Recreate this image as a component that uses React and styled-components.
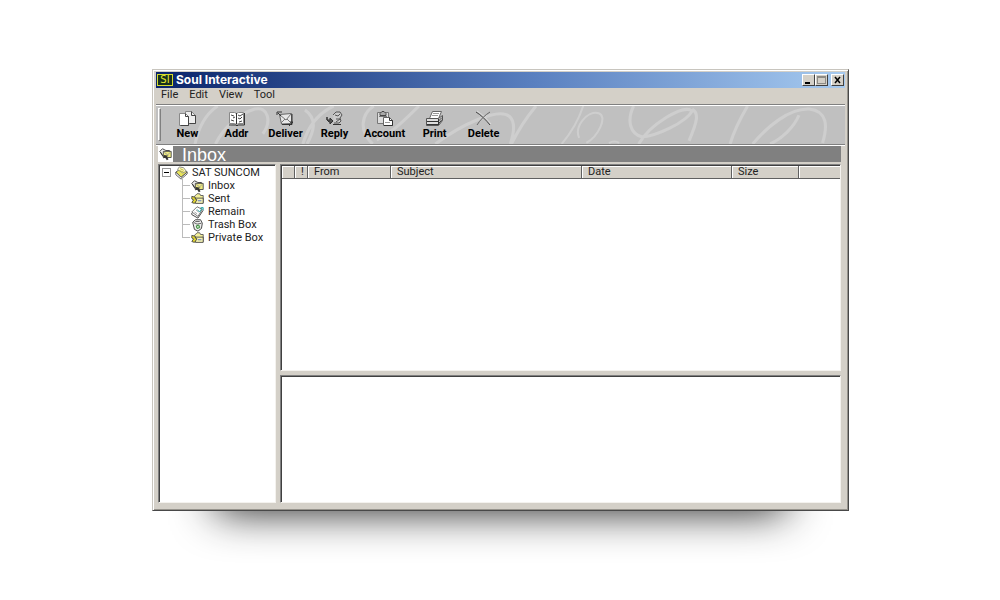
import React, { useState } from "react";
import styled, { createGlobalStyle } from "styled-components";

const tools = ["New", "Addr", "Deliver", "Reply", "Account", "Print", "Delete"];
const menus = ["File", "Edit", "View", "Tool"];
const folders = ["Inbox", "Sent", "Remain", "Trash Box", "Private Box"];
const columns = [
    { name: "", width: 13 },
    { name: "!", width: 13 },
    { name: "From", width: 83 },
    { name: "Subject", width: 191 },
    { name: "Date", width: 150 },
    { name: "Size", width: 67 },
    { name: "" },
];

const toolIcons = {
    New: (
        <g>
            <path d="M7.5 1.5h6l4 4v8h-10z" fill="#eee" stroke="#888" />
            <path d="M13.500 1.500v4h4v8h-6" fill="none" stroke="#444" />
            <path d="M1.500 3.500h6l3 3v9h-9z" fill="#fff" stroke="#888" />
            <path d="M7.500 3.500v3h3v9h-8" fill="none" stroke="#444" />
        </g>
    ),
    Addr: (
        <g>
            <path d="M2.5 2.5h5l2 1 2-1h5v11h-5l-2 1-2-1h-5z" fill="#fff" stroke="#888" />
            <path d="M9.5 3v11M17.5 3v12H11l-1 1-1-1H2" fill="none" stroke="#333" />
            <path d="M4 5l3 1M6 8l2-1M4 10l3 1M11 5l2 1 3-2M11 8l2 1 2-2M12 12l3-1" fill="none" stroke="#444" />
        </g>
    ),
    Deliver: (
        <g>
            <path d="M3.5 4.5l12-1v10l-10 .5z" fill="#e8e8e8" stroke="#666" />
            <path d="M4 5l6 5 5-6M5 13l4-4M15 13l-4-4" fill="none" stroke="#777" />
            <path d="M1 2h5M1 2v3M2 3l3 3M14 12h3M17 12l-4 4" fill="none" stroke="#333" />
            <path d="M6 14.500h10V4" fill="none" stroke="#333" />
        </g>
    ),
    Reply: (
        <g>
            <path d="M8 5l3-3h4l2 3-2 3 1 3-2 2H9" fill="#ccc" stroke="#555" />
            <path d="M10 5l3 1 2-2M11 9h4l-4 3" fill="none" stroke="#555" />
            <path d="M2 7v3h3V8l3 3-3 3v-2H4L2 10z" fill="#555" stroke="#333" />
            <path d="M8 14.500h8" stroke="#333" />
        </g>
    ),
    Account: (
        <g>
            <path d="M2.5 2.5h11v11h-11z" fill="#ddd" stroke="#777" />
            <path d="M5 3.5l2-2h2l2 2v2H5z" fill="#aaa" stroke="#444" />
            <path d="M4 6.5h8M3 13.5h5" stroke="#777" />
            <path d="M8.5 7.5h6l3 3v5h-9z" fill="#fff" stroke="#666" />
            <path d="M14.5 7.5v3h3v5H9" fill="none" stroke="#333" />
            <path d="M10 12.5h5" stroke="#999" />
        </g>
    ),
    Print: (
        <g>
            <path d="M7.5 1.5h9l-3 7h-9z" fill="#fff" stroke="#666" />
            <path d="M8 3.5h6M7 5.5h6" stroke="#999" />
            <path d="M1.5 8.5h12l4-3v5l-4 5h-12z" fill="#ddd" stroke="#555" />
            <path d="M2 11.5h11l4-4M2 14.500h11l4-5M13.5 9v6" fill="none" stroke="#333" />
        </g>
    ),
    Delete: (
        <g fill="none">
            <path d="M3 1c5 3 10 8 14 13" stroke="#ddd" />
            <path d="M2 2c5 3 10 8 14 13" stroke="#444" />
            <path d="M16 2C11 5 6 10 3 15" stroke="#666" />
        </g>
    ),
};

const folderIcons = {
    Root: (
        <g>
            <path d="M1 7l7-5 6 5-7 6z" fill="#e8e45c" stroke="#444" />
            <path d="M1 7v3l6 5 7-6V7l-7 6z" fill="#fff" stroke="#555" />
            <path d="M3 4l2-3 5 1 3 4-4 2z" fill="#fffcc0" stroke="#888" />
            <path d="M5 5l5 2M6 3l4 2" stroke="#b9b22d" />
        </g>
    ),
    Inbox: (
        <g>
            <path d="M1 5l3-3 4 2h4v6H4z" fill="#eee" stroke="#333" />
            <path d="M5 5h9v7H5z" fill="#efeb80" stroke="#444" />
            <path d="M6 6l4 3 3-3" fill="none" stroke="#999" />
            <path d="M6 9l5 1-2 1 2 3-2 1-2-3-2 1z" fill="#333" />
            <path d="M2 6l3 5" stroke="#333" />
        </g>
    ),
    Sent: (
        <g>
            <path d="M4 5l3-3h3l1 2h3v8H4z" fill="#f4f09a" stroke="#555" />
            <path d="M5 7h9v6H5z" fill="#f8f4b0" stroke="#444" />
            <path d="M1 5l4 1v2l2 1-3 4-3-1 2-3-2-1z" fill="#e2d72f" stroke="#444" />
            <path d="M8 10h4" stroke="#46c" />
        </g>
    ),
    Remain: (
        <g>
            <path d="M1 8l6-6 6 3-5 8z" fill="#fff" stroke="#666" />
            <path d="M1 9v2l7 4 6-9" fill="none" stroke="#333" />
            <path d="M4 8l3 2M6 6l3 2" stroke="#999" />
            <path d="M7 5l3 3 3-5M11 3h3v3" fill="none" stroke="#18a0a0" />
        </g>
    ),
    "Trash Box": (
        <g>
            <path d="M2 5l3-3h6l2 4-1 6-4 3-4-2z" fill="#eee" stroke="#333" />
            <path d="M3 5l4 2 5-1M5 4h5" fill="none" stroke="#555" />
            <path d="M6 9l3-1 1 3-3 1z" fill="#bfe0bf" stroke="#278027" />
        </g>
    ),
};
folderIcons["Private Box"] = folderIcons.Sent;

const FolderIcon = ({ name }) => (
    <StFolderIcon viewBox="0 0 15 16" aria-hidden="true">{folderIcons[name]}</StFolderIcon>
);

const App = () => {
    const [folder, setFolder] = useState("Inbox");
    const [open, setOpen] = useState(true);

    return (
        <StPage>
            <GlobalStyle />
            <StWindow>
                <StTitleBar>
                    <StLogo>SI</StLogo>
                    <StTitle>Soul Interactive</StTitle>
                    <StWinButton aria-label="Minimize">
                        <svg viewBox="0 0 9 8"><path d="M1 6h5v2H1z" /></svg>
                    </StWinButton>
                    <StWinButton aria-label="Maximize" $muted>
                        <svg viewBox="0 0 9 8"><path d="M0 0h9v8H0zM1 2v5h7V2z" fillRule="evenodd" /></svg>
                    </StWinButton>
                    <StWinButton aria-label="Close" $gap>
                        <svg viewBox="0 0 9 8"><path d="M2 1l5 6M7 1L2 7" stroke="#000" strokeWidth="1.500" /></svg>
                    </StWinButton>
                </StTitleBar>
                <StMenuBar>
                    {menus.map((menu) => <StMenu key={menu}>{menu}</StMenu>)}
                </StMenuBar>
                <StToolBar>
                    <StSwirl viewBox="0 0 688 37" preserveAspectRatio="xMinYMin slice" aria-hidden="true">
                        <path d="M38 37C42 18 51 6 60 0M58 37C66 20 83 7 96 3c13-3 17 12 8 24M143 37c5-17 15-30 30-37M145 4c13 9 8 22 2 33" strokeWidth="3" />
                        <path d="M212 0C200 8 197 24 211 37M256 0C244 12 230 26 215 33M272 37C296 19 333 1 344 10c7 6 4 18 1 27M370 0C360 12 352 25 346 37" strokeWidth="3" />
                        <path d="M416 0c-4 12-10 24-21 37M412 31c-5-11 8-27 19-24 9 3 0 22-12 29M441 36c4-2 7-2 10 0" strokeWidth="2" />
                        <path d="M465 0c-7 15-3 27 8 30 13 0 43-14 49-25-8-8-42 14-52 32M522 3c7 4 5 12-3 31" strokeWidth="3" />
                        <path d="M576 0c-7 12-13 23-17 37M581 37c14-17 36-35 55-34 18 2 18 17 13 33M626 9c-5 12-17 23-28 28" strokeWidth="3" />
                        <path d="M688 8c-8 7-11 20-6 23 4 0 6-4 6-12" strokeWidth="2" />
                    </StSwirl>
                    <StGrip />
                    {tools.map((tool) => (
                        <StTool key={tool}>
                            <svg viewBox="0 0 19 17" width="19" height="17" aria-hidden="true">{toolIcons[tool]}</svg>
                            {tool}
                        </StTool>
                    ))}
                </StToolBar>
                <StBody>
                    <StHeading>
                        <StHeadingIcon><FolderIcon name="Inbox" /></StHeadingIcon>
                        <h1>{folder}</h1>
                    </StHeading>
                    <StPanes>
                        <StTreePane>
                            <StRoot>
                                <StToggle aria-label="Toggle folders" aria-expanded={open} onClick={() => setOpen(!open)}>
                                    <svg viewBox="0 0 7 7"><path d={open ? "M1 3h5v1H1z" : "M1 3h5v1H1zM3 1h1v5H3z"} /></svg>
                                </StToggle>
                                <FolderIcon name="Root" />
                                <span>SAT SUNCOM</span>
                            </StRoot>
                            {open && (
                                <StFolders>
                                    {folders.map((name) => (
                                        <StFolderRow key={name}>
                                            <StFolder onClick={() => setFolder(name)}>
                                                <FolderIcon name={name} />
                                                {name}
                                            </StFolder>
                                        </StFolderRow>
                                    ))}
                                </StFolders>
                            )}
                        </StTreePane>
                        <StPane>
                            <StTable>
                                <thead>
                                    <tr>
                                        {columns.map((col, i) => (
                                            <StTh key={i} scope="col" $width={col.width}>{col.name}</StTh>
                                        ))}
                                    </tr>
                                </thead>
                            </StTable>
                        </StPane>
                        <StPane />
                    </StPanes>
                </StBody>
            </StWindow>
            <StShadow />
        </StPage>
    );
};

const GlobalStyle = createGlobalStyle`
    * {
        box-sizing: border-box;
    }
    body {
        margin: 0;
        background: #fff;
        color: #222;
        font: 11px/13px Roboto, "Liberation Sans", sans-serif;
    }
    button {
        padding: 0;
        border: 0;
        background: none;
        color: inherit;
        font: inherit;
    }
    svg {
        display: block;
    }
`;

const StPage = styled.div`
    display: flex;
    flex-direction: column;
    min-height: 100vh;
    padding: 69px 151px 29px 152px;
`;

const StWindow = styled.main`
    flex: 1;
    display: flex;
    flex-direction: column;
    padding: 2px 3px 7px;
    border: 1px solid;
    border-color: #c8c5be #484848 #484848 #c8c5be;
    background: #d4d0c8;
    box-shadow: inset 1px 1px #fff, inset -1px -1px #96938c;
`;

const StShadow = styled.div`
    height: 60px;
    overflow: hidden;

    &::before {
        content: "";
        display: block;
        height: 100px;
        margin: -100px 64px 0;
        box-shadow: 0 0 44px rgba(0, 0, 0, 0.9);
    }
`;

const StTitleBar = styled.header`
    display: flex;
    align-items: center;
    height: 16px;
    padding: 0 1px;
    background: linear-gradient(to right, #0a246a, #5a80c0 55%, #a6caf0);
`;

const StLogo = styled.span`
    width: 16px;
    height: 12px;
    border: 1px solid #d5dc2a;
    background: #17301c;
    color: #e4ea2c;
    font: 10px/10px "DejaVu Sans", sans-serif;
    text-align: center;
`;

const StTitle = styled.span`
    flex: 1;
    margin-left: 3px;
    color: #fff;
    font: bold 12px/16px Inter, sans-serif;
`;

const StWinButton = styled.button`
    display: grid;
    place-items: center;
    width: 13px;
    height: 12px;
    margin-left: ${({ $gap }) => ($gap ? "3px" : "0")};
    border: 1px solid;
    border-color: #fff #404040 #404040 #fff;
    background: #d4d0c8;
    fill: ${({ $muted }) => ($muted ? "#8d8b86" : "#000")};

    svg {
        width: 9px;
        height: 8px;
    }
`;

const StMenuBar = styled.nav`
    display: flex;
    gap: 11px;
    height: 16px;
    padding: 0 5px;
`;

const StMenu = styled.button`
    height: 14px;
    line-height: 14px;
`;

const StToolBar = styled.div`
    position: relative;
    display: flex;
    height: 41px;
    border-top: 1px solid #808080;
    border-bottom: 1px solid #808080;
    background: #c0c0c0;
    box-shadow: inset 0 1px #fff, 0 1px #fff;
`;

const StSwirl = styled.svg`
    position: absolute;
    inset: 1px 0 0;
    width: 100%;
    height: 38px;
    fill: none;
    stroke: #cecece;
`;

const StGrip = styled.span`
    width: 3px;
    margin: 3px 2px;
    border: 1px solid;
    border-color: #fff #808080 #808080 #fff;
`;

const StTool = styled.button`
    position: relative;
    display: flex;
    flex-direction: column;
    align-items: center;
    min-width: 49px;
    padding: 5px 5px 0;
    color: #000;
    font-weight: bold;
    line-height: 14px;
`;

const StBody = styled.div`
    flex: 1;
    display: flex;
    flex-direction: column;
    gap: 2px;
    padding: 1px 4px 0 2px;
`;

const StHeading = styled.div`
    display: flex;
    height: 16px;
    background: #808080;

    h1 {
        margin: 0 0 0 9px;
        color: #fff;
        font: 18px/18px "Liberation Sans", sans-serif;
    }
`;

const StHeadingIcon = styled.span`
    width: 15px;
    padding-top: 1px;
    background: #fff;
`;

const StPanes = styled.div`
    flex: 1;
    display: grid;
    grid-template: 207fr 128fr / 118px 1fr;
    gap: 4px;
`;

const StPane = styled.section`
    border: 1px solid;
    border-color: #808080 #f4f2ee #f4f2ee #808080;
    background: #fff;
    box-shadow: inset 1px 1px #404040;
    padding: 1px 0 0 1px;
`;

const StTreePane = styled(StPane)`
    grid-row: span 2;
    padding-left: 3px;
`;

const StFolderIcon = styled.svg`
    width: 15px;
    height: 14px;
    flex: none;
`;

const StRoot = styled.div`
    display: flex;
    align-items: center;
    height: 13px;

    span {
        margin-left: 3px;
    }
`;

const StToggle = styled.button`
    width: 9px;
    height: 9px;
    margin-right: 3px;
    border: 1px solid #999;
`;

const StFolders = styled.ul`
    margin: 0;
    padding: 0 0 0 20px;
    list-style: none;
`;

const StFolderRow = styled.li`
    display: flex;
    height: 13px;
    background:
        linear-gradient(#bbb, #bbb) 0 6px / 8px 1px no-repeat,
        linear-gradient(#bbb, #bbb) 0 0 / 1px 100% no-repeat;
    padding-left: 8px;

    &:last-child {
        background-size: 8px 1px, 1px 7px;
    }
`;

const StFolder = styled.button`
    display: flex;
    align-items: center;
    gap: 3px;
    height: 13px;
    white-space: nowrap;
`;

const StTable = styled.table`
    width: 100%;
    table-layout: fixed;
    border-collapse: separate;
    border-spacing: 0;
`;

const StTh = styled.th`
    width: ${({ $width }) => ($width ? `${$width}px` : "auto")};
    height: 13px;
    padding: 0 0 0 6px;
    border-right: 1px solid #606060;
    border-bottom: 1px solid #606060;
    background: #d4d0c8;
    box-shadow: inset 1px 1px #fff;
    font-weight: normal;
    line-height: 12px;
    text-align: left;

    &:last-child {
        border-right: 0;
    }
`;

export default App;
